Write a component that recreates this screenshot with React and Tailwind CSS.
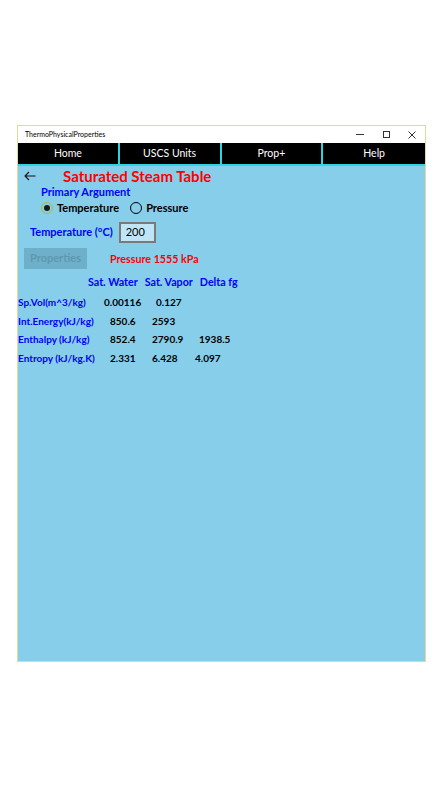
import React from "react";

const font = { fontFamily: 'Lato, "Open Sans", sans-serif' };

function Radio({ checked, label }) {
  return (
    <div className="flex items-center gap-[4px]">
      <span
        className={
          checked
            ? "w-[12px] h-[12px] rounded-full border-[1.5px] border-[#b9b92a] bg-[#87ceeb] flex items-center justify-center"
            : "w-[12px] h-[12px] rounded-full border-[1.5px] border-black"
        }
      >
        {checked && <span className="w-[6px] h-[6px] rounded-full bg-[#1a1a1a]" />}
      </span>
      <span className="text-[11px] font-bold text-black">{label}</span>
    </div>
  );
}

const rows = [
  { label: "Sp.Vol(m^3/kg)", a: "0.00116", b: "0.127", c: "", pa: "pl-0", pb: "pl-[5px]", pc: "pl-0" },
  { label: "Int.Energy(kJ/kg)", a: "850.6", b: "2593", c: "", pa: "pl-[6px]", pb: "pl-[1px]", pc: "pl-0" },
  { label: "Enthalpy (kJ/kg)", a: "852.4", b: "2790.9", c: "1938.5", pa: "pl-[6px]", pb: "pl-[1px]", pc: "pl-[4px]" },
  { label: "Entropy (kJ/kg.K)", a: "2.331", b: "6.428", c: "4.097", pa: "pl-[6px]", pb: "pl-[1px]", pc: "pl-0" },
];

export default function App() {
  return (
    <div className="w-[442px] h-[787px] bg-white pt-[125px] pl-[17px]" style={font}>
      <div className="w-[409px] h-[537px] border border-[#dcdca0] flex flex-col">
        {/* title bar */}
        <div className="h-[17px] bg-white flex items-center justify-between pl-[7px]">
          <span className="text-[7px] text-black">ThermoPhysicalProperties</span>
          <div className="flex items-center h-full text-[#333]">
            <span className="w-[26px] flex justify-center">
              <span className="w-[8px] h-px bg-[#333]" />
            </span>
            <span className="w-[26px] flex justify-center">
              <span className="w-[7px] h-[7px] border border-[#333]" />
            </span>
            <span className="w-[26px] flex justify-center">
              <svg width="8" height="8" viewBox="0 0 8 8">
                <path d="M0.5 0.5 L7.5 7.5 M7.5 0.5 L0.5 7.5" stroke="#333" strokeWidth="1" />
              </svg>
            </span>
          </div>
        </div>

        {/* nav */}
        <div className="h-[23px] bg-black grid grid-cols-4 border-b-2 border-[#2bd4e0]">
          {["Home", "USCS Units", "Prop+", "Help"].map((t, i) => (
            <div
              key={t}
              className={
                "flex items-center justify-center text-white text-[10.5px] " +
                (i < 3 ? "border-r-2 border-[#2bd4e0]" : "")
              }
            >
              {t}
            </div>
          ))}
        </div>

        {/* content */}
        <div className="flex-1 bg-[#87ceeb] flex flex-col">
          <div className="flex items-center pt-[2px] h-[18px]">
            <svg className="ml-[6px]" width="12" height="10" viewBox="0 0 12 10">
              <path d="M11.5 5 H1 M5 1 L1 5 L5 9" fill="none" stroke="#111" strokeWidth="1.1" />
            </svg>
            <span className="ml-[27px] text-[15px] font-bold text-[#ff0000] leading-none">
              Saturated Steam Table
            </span>
          </div>

          <div className="pl-[23px] mt-[1px] text-[11px] font-bold text-[#0000ff] leading-[14px]">
            Primary Argument
          </div>

          <div className="flex items-center pl-[23px] mt-[2px] gap-[11px] h-[14px]">
            <Radio checked label="Temperature" />
            <Radio label="Pressure" />
          </div>

          <div className="flex items-center pl-[12px] mt-[6px] h-[22px]">
            <span className="text-[11px] font-bold text-[#0000ff]">Temperature (°C)</span>
            <div className="ml-[6px] w-[37px] h-[21px] border-2 border-[#7a7a7a] bg-[#c0e6f5] flex items-center pl-[5px] text-[11px] text-black">
              200
            </div>
          </div>

          <div className="flex items-center pl-[6px] mt-[5px] h-[21px]">
            <div className="w-[63px] h-[21px] bg-[#6eb0c9] flex items-center justify-center text-[11px] font-bold text-[#5e98b0]">
              Properties
            </div>
            <span className="ml-[23px] mt-[2px] text-[10.7px] font-bold text-[#ff0000]">Pressure 1555 kPa</span>
          </div>

          <div className="flex items-center pl-[70px] mt-[6px] h-[14px] gap-[7px] text-[10.7px] font-bold text-[#0000ff]">
            <span>Sat. Water</span>
            <span>Sat. Vapor</span>
            <span>Delta fg</span>
          </div>

          <div className="mt-[4px] flex flex-col">
            {rows.map((r) => (
              <div key={r.label} className="grid grid-cols-[86px_47px_44px_60px] h-[18.7px] items-center font-bold">
                <span className="text-[#0000ff] whitespace-nowrap text-[10px]">{r.label}</span>
                <span className={"text-black text-[10px] " + r.pa}>{r.a}</span>
                <span className={"text-black text-[10px] " + r.pb}>{r.b}</span>
                <span className={"text-black text-[10px] " + r.pc}>{r.c}</span>
              </div>
            ))}
          </div>
        </div>
      </div>
    </div>
  );
}
